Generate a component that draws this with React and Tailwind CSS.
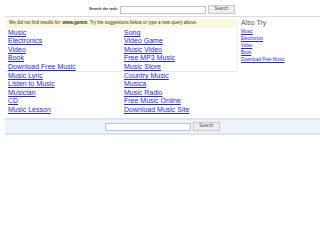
import React from "react"

const group1 = [
  ["Music", "Song"],
  ["Electronics", "Video Game"],
  ["Video", "Music Video"],
  ["Book", "Free MP3 Music"],
  ["Download Free Music", "Music Store"],
]

const group2 = [
  ["Music Lyric", "Country Music"],
  ["Listen to Music", "Musica"],
  ["Musician", "Music Radio"],
  ["CD", "Free Music Online"],
  ["Music Lesson", "Download Music Site"],
]

const alsoTry = ["Music", "Electronics", "Video", "Book", "Download Free Music"]

function LinkGrid({ rows, top }) {
  return (
    <div className={"grid grid-cols-[116px_1fr] pl-[3px] " + (top ? "pt-[1px]" : "pt-0")}>
      {rows.map(([a, b]) => (
        <React.Fragment key={a}>
          <a className="text-[7px] leading-[8.4px] text-[#2a2acc] underline">{a}</a>
          <a className="text-[7px] leading-[8.4px] text-[#2a2acc] underline">{b}</a>
        </React.Fragment>
      ))}
    </div>
  )
}

function SearchBox({ label }) {
  return (
    <div className="flex items-center gap-[2px]">
      {label && <span className="text-[3.8px] font-bold text-[#333] w-[29px] whitespace-nowrap">{label}</span>}
      <div className="w-[86px] h-[8px] border border-[#b8c4d8] bg-white" />
      <div className="w-[27px] h-[9px] border border-[#c8c8c8] bg-[#eeeeee] flex items-center justify-center text-[4.5px] text-[#555]">Search</div>
    </div>
  )
}

export default function App() {
  return (
    <div className="w-[320px] h-[240px] bg-white overflow-hidden" style={{ fontFamily: "Arial, 'Liberation Sans', sans-serif" }}>
      <div className="pt-[5px] pl-[89px] h-[16px]">
        <SearchBox label="Search the web:" />
      </div>
      <div className="ml-[5px] border-t border-[#d5dcea]" />
      <div className="flex ml-[5px] mt-[2px]">
        <div className="w-[230px]">
          <div className="bg-[#fbf8dc] h-[9px] flex items-center pl-[4px] text-[4.5px] text-[#333]">
            We did not find results for:&nbsp;<b>www.gemm</b>. Try the suggestions below or type a new query above.
          </div>
          <LinkGrid rows={group1} top />
          <div className="border-t border-[#e6e9f0]" />
          <LinkGrid rows={group2} />
        </div>
        <div className="ml-[2px] border-l border-[#eef0f5] pl-[3px] h-[52px]">
          <div className="text-[7px] text-[#555] leading-[8px]">Also Try</div>
          <div className="flex flex-col mt-[1px]">
            {alsoTry.map((t) => (
              <a key={t} className="text-[4.5px] leading-[7px] text-[#2a2acc] underline">{t}</a>
            ))}
          </div>
        </div>
      </div>
      <div className="ml-[5px] mt-[4px] border-t-2 border-b-2 border-[#dde3ef] bg-[#eef2fa] h-[17px] flex items-center pl-[100px]">
        <SearchBox />
      </div>
    </div>
  )
}
